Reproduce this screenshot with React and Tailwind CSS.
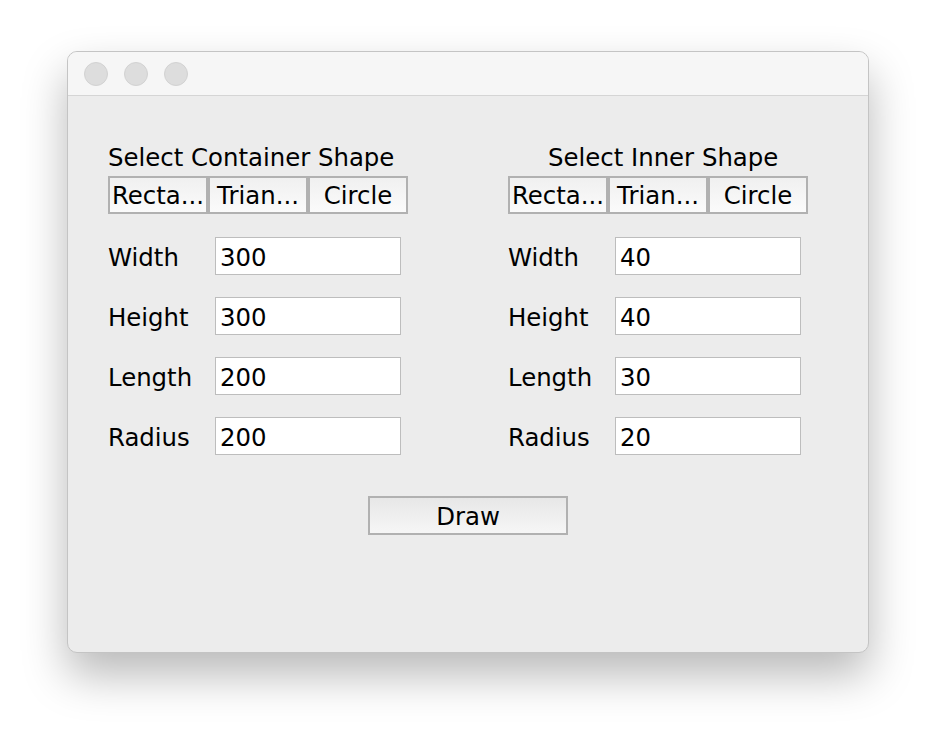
const font = { fontFamily: '"DejaVu Sans", "Liberation Sans", sans-serif' }

const fields = ['Width', 'Height', 'Length', 'Radius']

function ShapeColumn({ title, values, centerTitle }) {
  return (
    <div className="flex w-[300px] flex-col">
      <div className={`h-[27px] pt-[2px] text-[24.4px] leading-[26px] text-black ${centerTitle ? 'pl-[40px]' : ''}`}>{title}</div>
      <div className="mt-[6px] flex h-[38px]">
        {['Recta...', 'Trian...', 'Circle'].map((s) => (
          <div
            key={s}
            className="flex w-[100px] items-center justify-center border-2 border-[#b1b1b1] bg-gradient-to-b from-[#f0f0f0] to-[#fbfbfb] pt-[3px] text-[24.4px] leading-none text-black"
          >
            {s}
          </div>
        ))}
      </div>
      <div className="mt-[23px] flex flex-col gap-[22px]">
        {fields.map((f, i) => (
          <div key={f} className="flex h-[38px] items-center">
            <div className="w-[107px] pt-[4px] text-[24.4px] leading-none text-black">{f}</div>
            <div className="flex h-[38px] w-[186px] items-center border border-[#bdbdbd] bg-white pl-[4px] pt-[4px] text-[24.4px] leading-none text-black">
              {values[i]}
            </div>
          </div>
        ))}
      </div>
    </div>
  )
}

export default function App() {
  return (
    <div className="min-h-[736px] w-[936px] bg-white pl-[67px] pt-[51px]" style={font}>
      <div className="flex h-[602px] w-[802px] flex-col overflow-hidden rounded-[10px] border border-[#c4c4c4] bg-[#ececec] shadow-[0_22px_45px_rgba(0,0,0,0.28)]">
        <div className="flex h-[44px] shrink-0 items-center gap-[16px] border-b border-[#d5d5d5] bg-[#f6f6f6] pl-[16px]">
          <span className="h-[24px] w-[24px] rounded-full border border-[#d2d2d2] bg-[#dddddd]" />
          <span className="h-[24px] w-[24px] rounded-full border border-[#d2d2d2] bg-[#dddddd]" />
          <span className="h-[24px] w-[24px] rounded-full border border-[#d2d2d2] bg-[#dddddd]" />
        </div>
        <div className="flex flex-col pl-[40px] pt-[47px]">
          <div className="flex gap-[100px]">
            <ShapeColumn title="Select Container Shape" values={['300', '300', '200', '200']} />
            <ShapeColumn title="Select Inner Shape" values={['40', '40', '30', '20']} centerTitle />
          </div>
          <div className="mt-[41px] flex justify-center pr-[40px]">
            <button className="flex h-[39px] w-[200px] items-center justify-center border-2 border-[#b1b1b1] bg-gradient-to-b from-[#e7e7e7] to-[#f6f6f6] pt-[3px] text-[24.4px] leading-none text-black">
              Draw
            </button>
          </div>
        </div>
      </div>
    </div>
  )
}
